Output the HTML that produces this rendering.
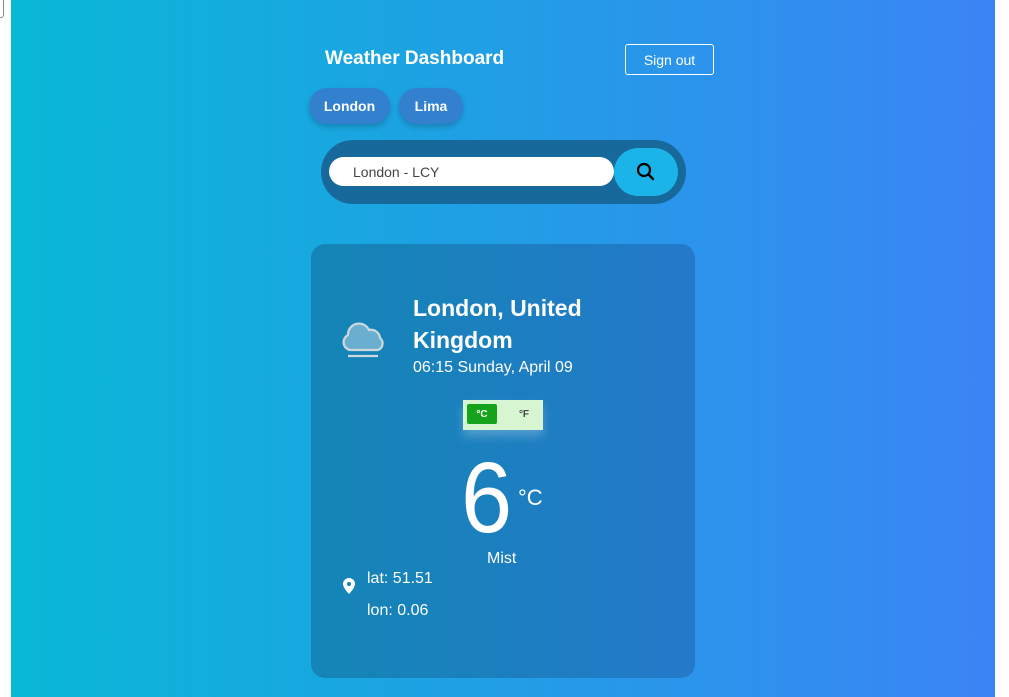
<!DOCTYPE html>
<html><head><meta charset="utf-8"><style>
*{margin:0;padding:0;box-sizing:border-box}
body{width:1009px;height:697px;background:#fff;position:relative;overflow:hidden;font-family:"Liberation Sans","DejaVu Sans",sans-serif;color:#fff}
.bg{position:absolute;left:11px;top:0;width:984px;height:697px;background:linear-gradient(90deg,#08b8d6,#3b84f5)}
.a{position:absolute}
.chip{position:absolute;top:88px;height:36px;border-radius:18px;background:#3380cf;font-weight:bold;font-size:14px;line-height:36px;text-align:center;box-shadow:0 3px 6px rgba(0,0,0,.2)}
</style></head><body>
<div class="bg"></div>
<div style="position:absolute;left:-4px;top:-4px;width:8px;height:22px;border:1px solid #888;border-radius:3px;background:#fff"></div>
<div class="a" style="left:325px;top:48px;font-size:19px;font-weight:bold">Weather Dashboard</div>
<div class="a" style="left:625px;top:44px;width:89px;height:31px;border:1px solid #fff;border-radius:3px;font-size:14px;line-height:30px;text-align:center">Sign out</div>
<div class="chip" style="left:309px;width:81px">London</div>
<div class="chip" style="left:399px;width:64px">Lima</div>
<div class="a" style="left:321px;top:140px;width:365px;height:64px;border-radius:32px;background:#17699c"></div>
<div class="a" style="left:329px;top:157px;width:285px;height:29px;border-radius:15px;background:#fff;color:#444;font-size:14px;line-height:30px;padding-left:24px">London - LCY</div>
<div class="a" style="left:614px;top:148px;width:64px;height:48px;border-radius:24px;background:#1ab4e8">
<svg width="64" height="48"><circle cx="30" cy="22" r="6" fill="none" stroke="#000" stroke-width="2.2"/><line x1="34.5" y1="26.5" x2="39" y2="31" stroke="#000" stroke-width="2.4" stroke-linecap="round"/></svg></div>
<div class="a" style="left:311px;top:244px;width:384px;height:434px;border-radius:14px;background:linear-gradient(90deg,rgba(15,90,130,.45),rgba(25,80,150,.4))"></div>
<svg class="a" style="left:340px;top:318px" width="48" height="42"><path d="M10 32 A8 8 0 0 1 8 17 A11 11 0 0 1 29 12 A9 9 0 0 1 40 20 A7 7 0 0 1 38 32 Z" fill="#6aaed0" stroke="#cfd8dc" stroke-width="2.2"/><line x1="8" y1="38" x2="38" y2="38" stroke="#cfd8dc" stroke-width="2.2"/></svg>
<div class="a" style="left:413px;top:292px;font-size:23px;font-weight:bold;line-height:32px">London, United<br>Kingdom</div>
<div class="a" style="left:413px;top:359px;font-size:16px">06:15 Sunday, April 09</div>
<div class="a" style="left:463px;top:400px;width:80px;height:30px;background:#d8f5d2;box-shadow:0 6px 10px rgba(255,255,255,.25)"></div>
<div class="a" style="left:467px;top:404px;width:30px;height:20px;background:#16a31c;border-radius:2px;font-size:10px;font-weight:bold;line-height:22px;text-align:center">°C</div>
<div class="a" style="left:509px;top:404px;width:30px;height:20px;color:#444;font-size:10px;font-weight:bold;line-height:22px;text-align:center">°F</div>
<div class="a" style="left:461px;top:448px;font-size:100px;font-weight:300;line-height:100px;transform:scaleX(.92);transform-origin:left">6</div>
<div class="a" style="left:518px;top:485px;font-size:22px">°C</div>
<div class="a" style="left:487px;top:550px;font-size:16px">Mist</div>
<svg class="a" style="left:342px;top:577px" width="14" height="18"><path d="M7 1 A6 6 0 0 1 13 7 C13 11 7 17 7 17 C7 17 1 11 1 7 A6 6 0 0 1 7 1Z" fill="#fff"/><circle cx="7" cy="7" r="2" fill="#1580b8"/></svg>
<div class="a" style="left:367px;top:570px;font-size:16px">lat: 51.51</div>
<div class="a" style="left:367px;top:602px;font-size:16px">lon: 0.06</div>
</body></html>
